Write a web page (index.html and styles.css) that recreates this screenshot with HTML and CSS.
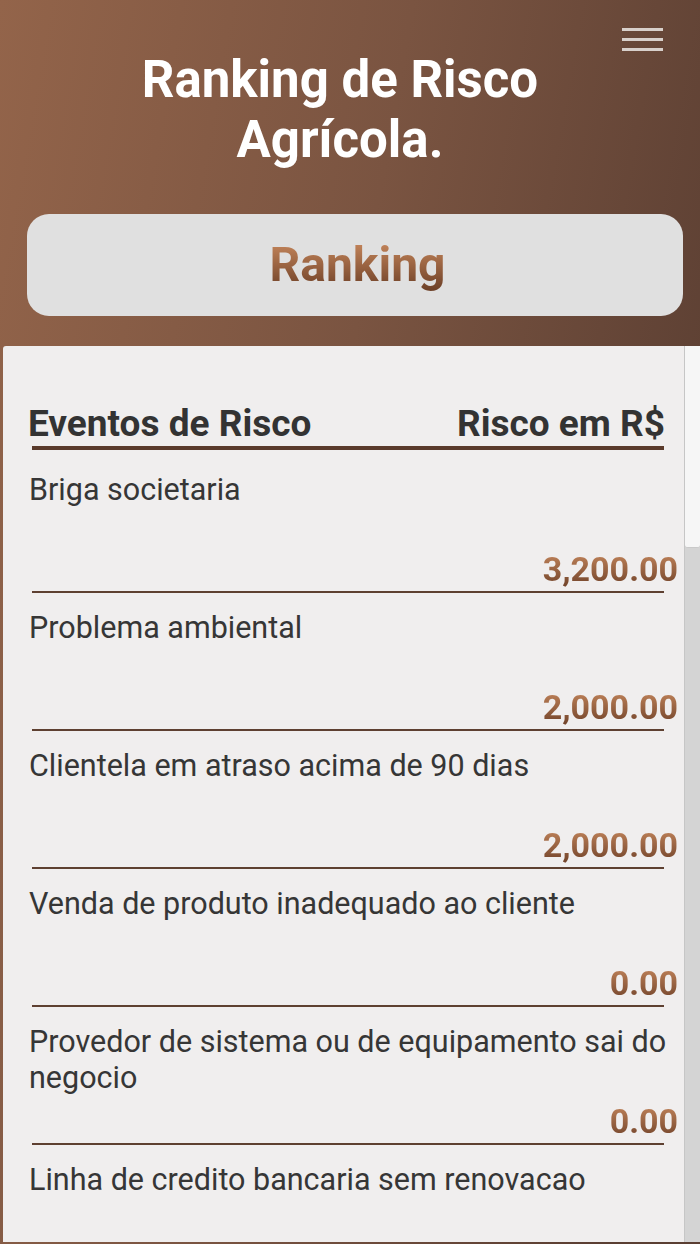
FILE: index.html
```html
<!DOCTYPE html>
<html lang="pt">
<head>
    <meta charset="UTF-8">
    <meta name="viewport" content="width=device-width, initial-scale=1.0">
    <title>Ranking de Risco Agrícola</title>
    <link rel="stylesheet" href="styles.css">
</head>
<body>
    <div class="screen">
        <div class="menu"> <!-- botão de menu -->
            <span></span>
            <span></span>
            <span></span>
        </div>
        <h1 class="title">Ranking de Risco<br>Agrícola.</h1>
        <div class="tab">
            <span class="tab-text">Ranking</span>
        </div>
        <div class="panel">
            <div class="list">
                <div class="list-head">
                    <span>Eventos de Risco</span>
                    <span>Risco em R$</span>
                </div>
                <div class="head-line"></div>
                <div class="row">
                    <div class="label">Briga societaria</div>
                    <div class="value">3,200.00</div>
                </div>
                <div class="row">
                    <div class="label">Problema ambiental</div>
                    <div class="value">2,000.00</div>
                </div>
                <div class="row">
                    <div class="label">Clientela em atraso acima de 90 dias</div>
                    <div class="value">2,000.00</div>
                </div>
                <div class="row">
                    <div class="label">Venda de produto inadequado ao cliente</div>
                    <div class="value">0.00</div>
                </div>
                <div class="row">
                    <div class="label">Provedor de sistema ou de equipamento sai do negocio</div>
                    <div class="value">0.00</div>
                </div>
                <div class="row">
                    <div class="label">Linha de credito bancaria sem renovacao</div>
                </div>
            </div>
            <div class="scrollbar"> <!-- barra de rolagem -->
                <div class="thumb"></div>
            </div>
        </div>
    </div>
</body>
</html>
```

FILE: styles.css
```css
body {
    margin: 0;
    padding: 0;
    font-family: Roboto, "Liberation Sans", sans-serif;
}
.screen {
    position: relative; /* para o menu */
    width: 700px;
    height: 1244px;
    overflow: hidden;
    display: flex;
    flex-direction: column;
    background: linear-gradient(100deg, #93644a 0%, #7a5441 45%, #5a3e32 90%);
}
.menu {
    position: absolute;
    top: 28px;
    left: 622px;
    width: 41px;
    display: flex;
    flex-direction: column;
    gap: 7px;
}
.menu span {
    display: block;
    height: 3px;
    background-color: #d8d0cb;
}
.title {
    margin: 50px 20px 0 0;
    color: #fff;
    font-size: 51px;
    font-weight: 700;
    line-height: 60px;
    text-align: center;
}
.tab {
    margin: 44px 17px 0 27px;
    height: 102px;
    background-color: #e0e0e0;
    border-radius: 22px;
    display: flex;
    align-items: center;
    justify-content: center;
    padding-left: 5px;
}
.tab-text {
    font-size: 48px;
    font-weight: 700;
    line-height: 56px;
    background: linear-gradient(to bottom, #cd8c60, #683c24);
    -webkit-background-clip: text;
    background-clip: text;
    color: transparent;
}
.panel {
    margin: 30px 0 0 3px;
    height: 896px;
    display: flex;
}
.list {
    width: 682px;
    background-color: #f0eeee;
    border-radius: 3px 0 0 0;
    overflow: hidden;
}
.list-head {
    display: flex;
    justify-content: space-between;
    padding: 57px 19px 0 25px;
    font-size: 37px;
    font-weight: 700;
    line-height: 42px;
    color: #333;
}
.head-line {
    height: 4px;
    margin: 1px 20px 5px 29px;
    background-color: #5a3a2b;
}
.row {
    height: 138px;
    box-sizing: border-box;
    padding-top: 17px;
    display: flex;
    flex-direction: column;
}
.row::after {
    content: "";
    height: 2px;
    margin: 0 20px 0 29px;
    background-color: #5e4031;
    flex-shrink: 0;
}
.label {
    flex: 1; /* empurra o valor para baixo */
    padding-left: 26px;
    font-size: 30.5px;
    line-height: 36px;
    color: #363636;
}
.value {
    align-self: flex-end;
    margin: 0 6px 2px 0;
    font-size: 34px;
    font-weight: 700;
    line-height: 40px;
    background: linear-gradient(to bottom, #c98a5f, #6c3f27);
    -webkit-background-clip: text;
    background-clip: text;
    color: transparent;
}
.scrollbar {
    width: 15px;
    background-color: #d4d4d4;
    border-left: 1px solid #c6c6c6;
}
.thumb {
    height: 201px;
    background-color: #f6f6f6;
    border-bottom: 1px solid #c9c9c9;
    border-radius: 0 0 3px 3px;
}
```
